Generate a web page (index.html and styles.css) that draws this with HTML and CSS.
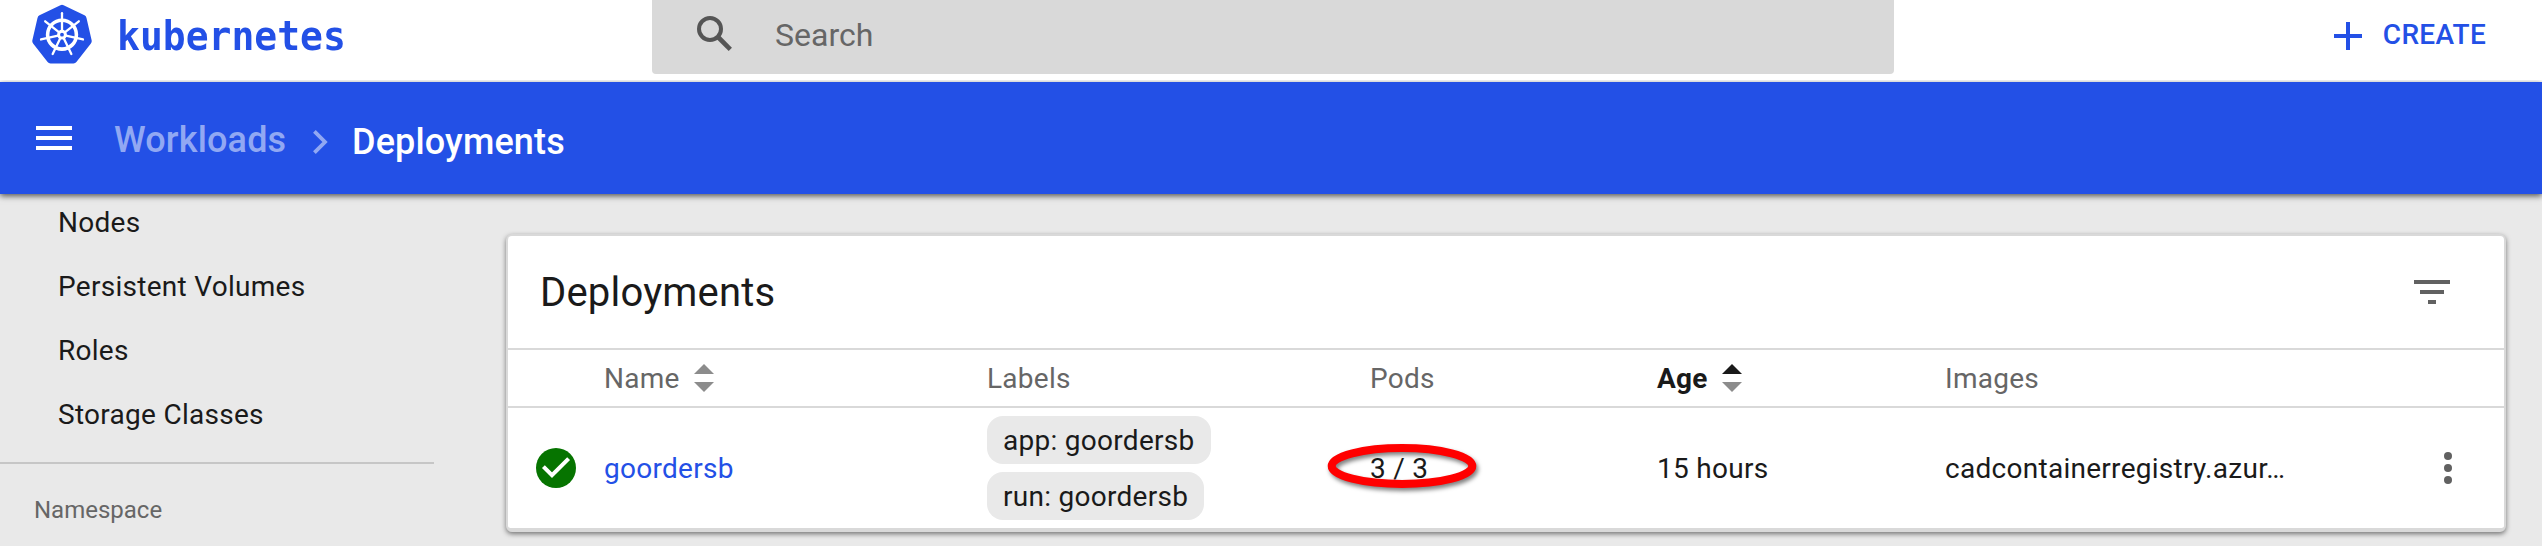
FILE: index.html
```html
<!DOCTYPE html>
<html lang="en">
<head>
<meta charset="utf-8">
<title>Kubernetes Dashboard</title>
<link rel="stylesheet" href="styles.css">
</head>
<body>
<header class="header">
  <a class="brand">
    <svg class="brand-mark" viewBox="0 0 60 60" width="60" height="60">
      <path d="M28.4 1.2Q30 .5 31.6 1.2L52.5 11.3Q54.1 12.1 54.5 13.9L59.7 36.5Q60 38.2 58.9 39.6L44.4 58.1Q43.300 59.500 41.500 59.500H18.500Q16.700 59.500 15.600 58.100L1.100 39.600Q0 38.200 .3 36.500L5.500 13.900Q5.900 12.100 7.500 11.300Z" fill="#2350e6"/>
      <g stroke="#fff" fill="none" stroke-linecap="round" transform="translate(30 30.700)">
        <circle r="14.400" stroke-width="3.600"/>
        <g stroke-width="2.300">
          <path d="M0 -4V-21.500"/>
          <path d="M0 -4V-21.500" transform="rotate(51.430)"/>
          <path d="M0 -4V-21.500" transform="rotate(102.860)"/>
          <path d="M0 -4V-21.500" transform="rotate(154.290)"/>
          <path d="M0 -4V-21.500" transform="rotate(205.710)"/>
          <path d="M0 -4V-21.500" transform="rotate(257.140)"/>
          <path d="M0 -4V-21.500" transform="rotate(308.570)"/>
        </g>
        <circle r="3.400" stroke-width="3"/>
      </g>
    </svg>
    <span class="brand-name">kubernetes</span>
  </a>
  <div class="search">
    <svg viewBox="0 0 36 36" width="36" height="36" fill="none" stroke="#555">
      <circle cx="13" cy="13" r="11" stroke-width="4"/>
      <path d="M21.500 21.500L33.300 33.300" stroke-width="4.600"/>
    </svg>
    <span class="search-text">Search</span>
  </div>
  <a class="create">
    <svg viewBox="0 0 28 28" width="28" height="28"><path d="M12 0h4v12h12v4H16v12h-4V16H0v-4h12z" fill="#2350e6"/></svg>
    <span class="create-text">CREATE</span>
  </a>
</header>
<div class="toolbar">
  <svg class="menu" viewBox="0 0 36 24" width="36" height="24"><path d="M0 0h36v4H0zM0 10h36v4H0zM0 20h36v4H0z" fill="#fff"/></svg>
  <span class="crumb crumb-parent">Workloads</span>
  <svg class="chevron" viewBox="0 0 15 24" width="15" height="24"><path d="M1.400 1.400L12 12L1.400 22.600" fill="none" stroke="#91a8f3" stroke-width="3.800"/></svg>
  <span class="crumb crumb-current">Deployments</span>
</div>
<div class="page">
  <nav class="sidebar">
    <a class="nav-item">Nodes</a>
    <a class="nav-item">Persistent Volumes</a>
    <a class="nav-item">Roles</a>
    <a class="nav-item">Storage Classes</a>
    <div class="namespace">Namespace</div>
  </nav>
  <main class="content">
    <section class="card">
      <div class="card-head">
        <h2 class="card-title">Deployments</h2>
        <svg viewBox="0 0 36 24" width="36" height="24"><path d="M0 0h36v4H0zM6 10h24v4H6zM14 20h8v4h-8z" fill="#616161"/></svg>
      </div>
      <div class="row row-head">
        <span></span>
        <span class="sortable"><span class="text">Name</span> <svg viewBox="0 0 20 28" width="20" height="28" fill="#8c8c8c"><path d="M0 10L10 0l10 10z"/><path d="M0 18L10 28l10-10z"/></svg></span>
        <span class="text">Labels</span>
        <span class="text">Pods</span>
        <span class="sortable sorted"><span class="text">Age</span> <svg viewBox="0 0 20 28" width="20" height="28" fill="#8c8c8c"><path d="M0 10L10 0l10 10z" fill="#1a1a1a"/><path d="M0 18L10 28l10-10z"/></svg></span>
        <span class="text">Images</span>
        <span></span>
      </div>
      <div class="row row-body">
        <svg viewBox="0 0 40 40" width="40" height="40"><circle cx="20" cy="20" r="20" fill="#067400"/><path d="M7.400 18.600L16 27.200L32.600 10.600" fill="none" stroke="#fff" stroke-width="4"/></svg>
        <a class="text link">goordersb</a>
        <div class="chips"><span class="chip">app: goordersb</span><span class="chip">run: goordersb</span></div>
        <span class="text pods">3 / 3
          <svg class="ring" viewBox="0 0 160 56" width="160" height="56"><ellipse cx="78" cy="26" rx="70.300" ry="18" fill="none" stroke="#f00" stroke-width="8"/></svg>
        </span>
        <span class="text">15 hours</span>
        <span class="text">cadcontainerregistry.azur…</span>
        <svg class="more" viewBox="0 0 8 32" width="8" height="32" fill="#616161"><circle cx="4" cy="4" r="4"/><circle cx="4" cy="16" r="4"/><circle cx="4" cy="28" r="4"/></svg>
      </div>
    </section>
  </main>
</div>
</body>
</html>
```

FILE: styles.css
```css
* { box-sizing: border-box; }
body {
  margin: 0;
  height: 546px;
  overflow: hidden;
  background: #e9e9e9;
  color: #1a1a1a;
  font: 28px/32px Roboto, sans-serif;
}
svg { display: block; flex: none; }
.header {
  display: flex;
  height: 82px;
  padding-right: 56px;
  background: #fff;
}
.brand { display: flex; width: 652px; padding: 4px 0 0 32px; color: #2350e6; }
.brand-name {
  margin-left: 25px;
  font: bold 38px/60px "DejaVu Sans Mono", monospace;
  transform: scaleY(1.06);
  transform-origin: 0 0;
}
.search {
  display: flex;
  width: 1242px;
  height: 74px;
  padding: 16px 0 0 45px;
  border-radius: 0 0 4px 4px;
  background: #d9d9d9;
  color: #666;
}
.search-text { margin-left: 42px; font-size: 32px; line-height: 38px; }
.create {
  display: flex;
  margin-left: auto;
  padding-top: 22px;
  color: #2350e6;
  font-weight: 500;
  letter-spacing: .28px;
}
.create-text { margin: -3px 0 0 21px; }
.toolbar {
  position: relative;
  z-index: 1;
  display: flex;
  align-items: flex-start;
  height: 112px;
  padding-left: 36px;
  background: #2350e6;
  box-shadow: 0 2px 6px rgba(0, 0, 0, .65);
  clip-path: inset(-2px 0 -12px 0);
}
.menu { margin-top: 44px; }
.crumb { font-size: 36px; font-weight: 500; line-height: 40px; letter-spacing: .15px; }
.crumb-parent { width: 199px; margin: 38px 0 0 42px; color: #91a8f3; }
.chevron { margin-top: 48px; }
.crumb-current { margin: 40px 0 0 24px; color: #fff; }
.page { display: flex; height: 352px; }
.sidebar { width: 434px; margin-top: -3px; }
.nav-item { display: block; padding-left: 58px; line-height: 64px; letter-spacing: .28px; }
.namespace {
  margin-top: 15px;
  padding: 30px 0 0 34px;
  border-top: 2px solid #c6c6c6;
  color: #666;
  font-size: 24px;
}
.content { padding: 40px 36px 0 72px; flex: 1; }
.card {
  height: 298px;
  border: 2px solid #d9d9d9;
  border-bottom-width: 4px;
  border-radius: 6px;
  background: #fff;
  box-shadow: 0 2px 5px rgba(0, 0, 0, .5);
}
.card-head {
  display: flex;
  align-items: center;
  justify-content: space-between;
  height: 112px;
  padding: 0 54px 0 32px;
}
.card-title {
  margin: 0;
  padding-top: 2px;
  font-size: 40px;
  font-weight: 400;
  line-height: 48px;
  letter-spacing: .2px;
}
.row {
  display: grid;
  grid-template-columns: 68px 383px 383px 287px 288px 499px 8px;
  align-items: center;
  padding-left: 28px;
  border-top: 2px solid #d9d9d9;
  letter-spacing: .28px;
}
.row-head { height: 58px; color: #666; }
.row-body { height: 122px; }
.text { padding-top: 2px; }
.sortable { display: flex; align-items: center; gap: 14px; }
.sorted { color: #1a1a1a; font-weight: 700; }
.link { color: #2350e6; }
.chips { display: flex; flex-direction: column; align-items: flex-start; gap: 8px; }
.chip { padding: 9px 16px 7px; border-radius: 16px; background: #e9e9e9; }
.pods { position: relative; }
.ring {
  position: absolute;
  left: -46px;
  top: -11px;
  filter: drop-shadow(2px 3px 2px rgba(0, 0, 0, .5));
}
```
